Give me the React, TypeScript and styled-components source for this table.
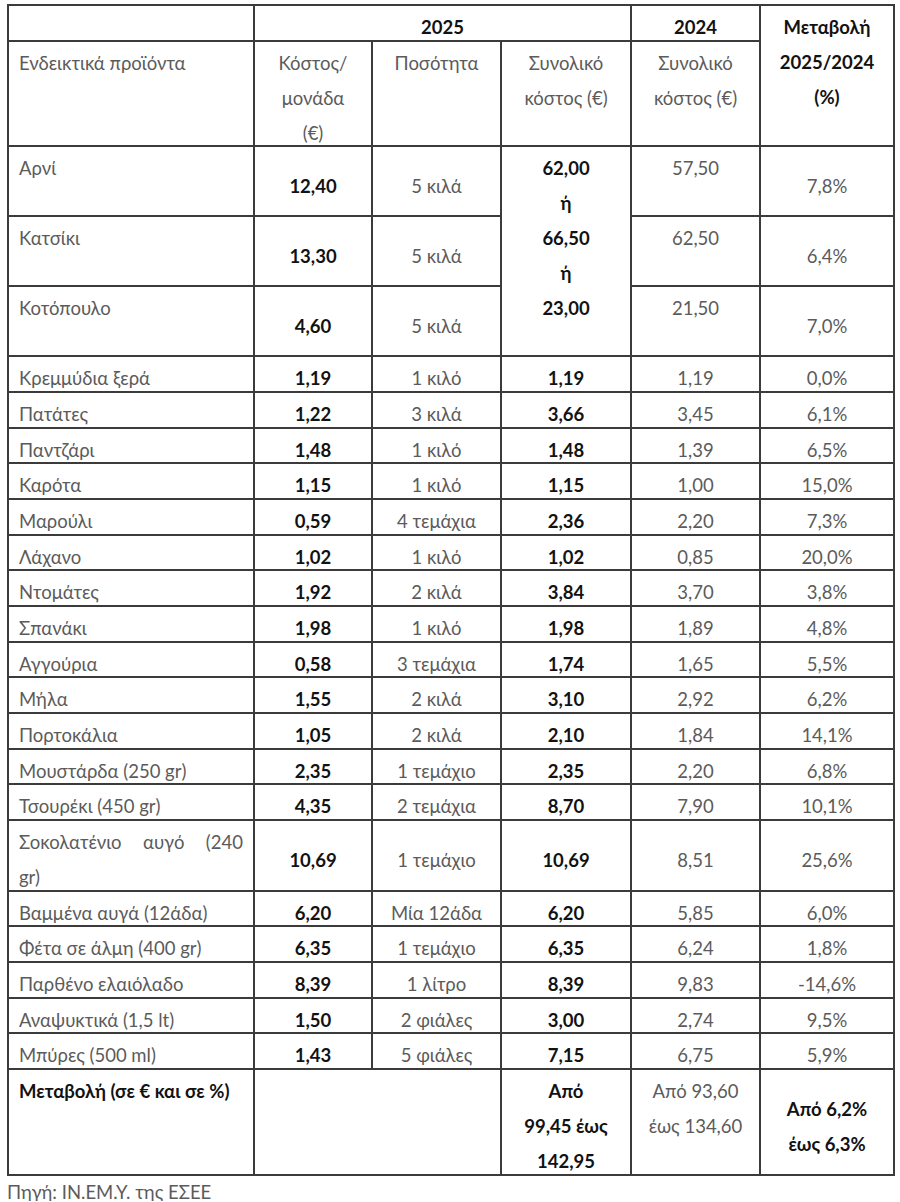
import React from "react";
import styled, { createGlobalStyle } from "styled-components";

const GlobalStyle = createGlobalStyle`
  html, body { margin: 0; padding: 0; background: #ffffff; }
  body { font-family: Lato, "Noto Sans", sans-serif; }
`;

const Page = styled.div`
  padding: 4px 0 0 7px;
  font-family: Lato, "Noto Sans", sans-serif;
  font-size: 18.5px;
  color: #5b5b5b;
`;

const Table = styled.table`
  border-collapse: collapse;
  table-layout: fixed;
  width: 886px;
`;

const Col = styled.col<{ $w: number }>`
  width: ${(p) => p.$w}px;
`;

const Row = styled.tr<{ $h?: number }>`
  ${(p) => (p.$h ? `height: ${p.$h}px;` : "")}
`;

const Cell = styled.td<{
  $left?: boolean;
  $middle?: boolean;
  $bold?: boolean;
}>`
  border: 2px solid #3b3b3b;
  padding: 4px 10px 0 10px;
  line-height: 35px;
  text-align: ${(p) => (p.$left ? "left" : "center")};
  white-space: ${(p) => (p.$left ? "nowrap" : "normal")};
  vertical-align: ${(p) => (p.$middle ? "middle" : "top")};
  font-weight: ${(p) => (p.$bold ? 700 : 400)};
  color: ${(p) => (p.$bold ? "#121212" : "#5b5b5b")};
`;

const CellText = styled.div`
  margin-bottom: -5.33px;
`;

const Line = styled.div<{ $justify?: boolean }>`
  ${(p) => (p.$justify ? "text-align: justify; text-align-last: justify;" : "")}
`;

const Source = styled.p`
  margin: 0;
  padding-top: 7px;
  line-height: 18px;
  color: #5b5b5b;
`;

type Item = [string[], string, string, string, string, string];

const items: Item[] = [
  [["Κρεμμύδια ξερά"], "1,19", "1 κιλό", "1,19", "1,19", "0,0%"],
  [["Πατάτες"], "1,22", "3 κιλά", "3,66", "3,45", "6,1%"],
  [["Παντζάρι"], "1,48", "1 κιλό", "1,48", "1,39", "6,5%"],
  [["Καρότα"], "1,15", "1 κιλό", "1,15", "1,00", "15,0%"],
  [["Μαρούλι"], "0,59", "4 τεμάχια", "2,36", "2,20", "7,3%"],
  [["Λάχανο"], "1,02", "1 κιλό", "1,02", "0,85", "20,0%"],
  [["Ντομάτες"], "1,92", "2 κιλά", "3,84", "3,70", "3,8%"],
  [["Σπανάκι"], "1,98", "1 κιλό", "1,98", "1,89", "4,8%"],
  [["Αγγούρια"], "0,58", "3 τεμάχια", "1,74", "1,65", "5,5%"],
  [["Μήλα"], "1,55", "2 κιλά", "3,10", "2,92", "6,2%"],
  [["Πορτοκάλια"], "1,05", "2 κιλά", "2,10", "1,84", "14,1%"],
  [["Μουστάρδα (250 gr)"], "2,35", "1 τεμάχιο", "2,35", "2,20", "6,8%"],
  [["Τσουρέκι (450 gr)"], "4,35", "2 τεμάχια", "8,70", "7,90", "10,1%"],
  [["Σοκολατένιο αυγό (240", "gr)"], "10,69", "1 τεμάχιο", "10,69", "8,51", "25,6%"],
  [["Βαμμένα αυγά (12άδα)"], "6,20", "Μία 12άδα", "6,20", "5,85", "6,0%"],
  [["Φέτα σε άλμη (400 gr)"], "6,35", "1 τεμάχιο", "6,35", "6,24", "1,8%"],
  [["Παρθένο ελαιόλαδο"], "8,39", "1 λίτρο", "8,39", "9,83", "-14,6%"],
  [["Αναψυκτικά (1,5 lt)"], "1,50", "2 φιάλες", "3,00", "2,74", "9,5%"],
  [["Μπύρες (500 ml)"], "1,43", "5 φιάλες", "7,15", "6,75", "5,9%"],
];

const meats: [string, string, string, string][] = [
  ["Αρνί", "12,40", "57,50", "7,8%"],
  ["Κατσίκι", "13,30", "62,50", "6,4%"],
  ["Κοτόπουλο", "4,60", "21,50", "7,0%"],
];

const Lines = ({ lines, justify }: { lines: string[]; justify?: boolean }) => (
  <CellText>
    {lines.map((l, i) => (
      <Line key={i} $justify={justify && i < lines.length - 1}>
        {l}
      </Line>
    ))}
  </CellText>
);

export default function App() {
  return (
    <Page>
      <GlobalStyle />
      <Table>
        <colgroup>
          <Col $w={246} />
          <Col $w={118} />
          <Col $w={129} />
          <Col $w={130} />
          <Col $w={129} />
          <Col $w={134} />
        </colgroup>
        <tbody>
          <Row>
            <Cell />
            <Cell colSpan={3} $bold>
              <Lines lines={["2025"]} />
            </Cell>
            <Cell $bold>
              <Lines lines={["2024"]} />
            </Cell>
            <Cell rowSpan={2} $bold>
              <Lines lines={["Μεταβολή", "2025/2024", "(%)"]} />
            </Cell>
          </Row>
          <Row>
            <Cell $left>
              <Lines lines={["Ενδεικτικά προϊόντα"]} />
            </Cell>
            <Cell>
              <Lines lines={["Κόστος/", "μονάδα", "(€)"]} />
            </Cell>
            <Cell>
              <Lines lines={["Ποσότητα"]} />
            </Cell>
            <Cell>
              <Lines lines={["Συνολικό", "κόστος (€)"]} />
            </Cell>
            <Cell>
              <Lines lines={["Συνολικό", "κόστος (€)"]} />
            </Cell>
          </Row>
          {meats.map(([name, unit, prev, pct], i) => (
            <Row key={name} $h={70}>
              <Cell $left>
                <Lines lines={[name]} />
              </Cell>
              <Cell $bold $middle>
                <Lines lines={[unit]} />
              </Cell>
              <Cell $middle>
                <Lines lines={["5 κιλά"]} />
              </Cell>
              {i === 0 && (
                <Cell rowSpan={3} $bold>
                  <Lines lines={["62,00", "ή", "66,50", "ή", "23,00"]} />
                </Cell>
              )}
              <Cell>
                <Lines lines={[prev]} />
              </Cell>
              <Cell $middle>
                <Lines lines={[pct]} />
              </Cell>
            </Row>
          ))}
          {items.map(([name, unit, qty, total, prev, pct]) => (
            <Row key={name.join(" ")}>
              <Cell $left>
                <Lines lines={name} justify />
              </Cell>
              <Cell $bold $middle>
                <Lines lines={[unit]} />
              </Cell>
              <Cell $middle>
                <Lines lines={[qty]} />
              </Cell>
              <Cell $bold $middle>
                <Lines lines={[total]} />
              </Cell>
              <Cell $middle>
                <Lines lines={[prev]} />
              </Cell>
              <Cell $middle>
                <Lines lines={[pct]} />
              </Cell>
            </Row>
          ))}
          <Row>
            <Cell $left $bold>
              <Lines lines={["Μεταβολή (σε € και σε %)"]} />
            </Cell>
            <Cell colSpan={2} />
            <Cell $bold>
              <Lines lines={["Από", "99,45 έως", "142,95"]} />
            </Cell>
            <Cell>
              <Lines lines={["Από 93,60", "έως 134,60"]} />
            </Cell>
            <Cell $bold $middle>
              <Lines lines={["Από 6,2%", "έως 6,3%"]} />
            </Cell>
          </Row>
        </tbody>
      </Table>
      <Source>Πηγή: ΙΝ.ΕΜ.Υ. της ΕΣΕΕ</Source>
    </Page>
  );
}
